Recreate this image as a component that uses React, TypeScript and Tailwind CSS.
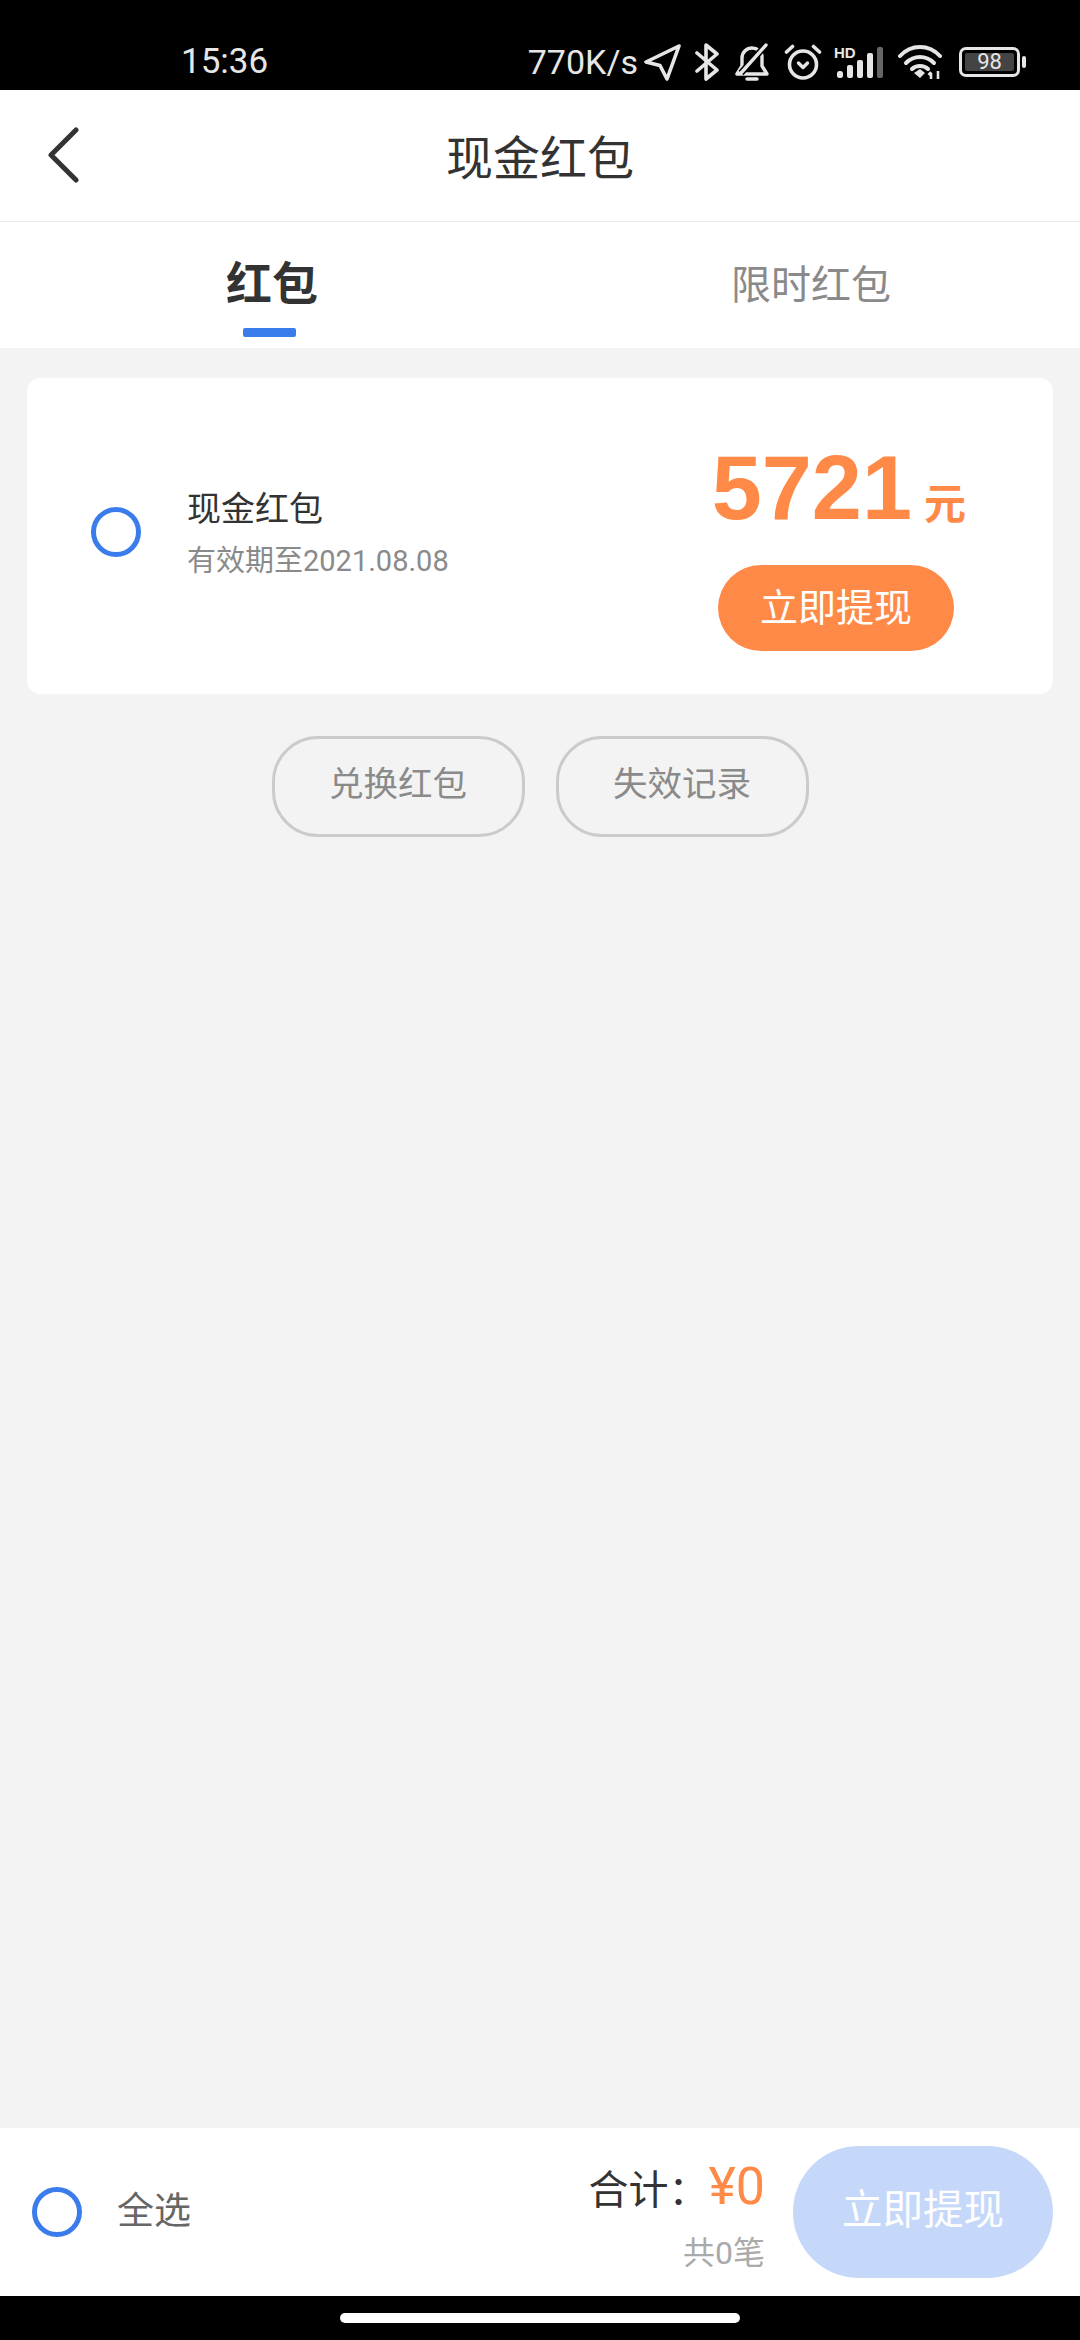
import React from "react";

const CJK = "font-['Roboto','Noto_Sans_CJK_SC',sans-serif]";

function Radio({ className }: { className?: string }) {
  return <div className={`w-[50px] h-[50px] rounded-full border-[5px] border-[#3b7cec] shrink-0 ${className ?? ""}`} />;
}

function StatusIcons() {
  const s = "#e6e6e6";
  return (
    <div className="flex items-center">
      <svg width="37" height="37" viewBox="0 0 37 37" fill="none" className="ml-[6px]">
        <path d="M35 2 L2 18 L16 21.5 L23 35 Z" stroke={s} strokeWidth="3.6" strokeLinejoin="round" />
      </svg>
      <svg width="24" height="38" viewBox="0 0 24 38" fill="none" className="ml-[14px]">
        <path d="M2 10 L22 27 L11 36 V2 L22 11 L2 28" stroke={s} strokeWidth="3.6" strokeLinejoin="round" strokeLinecap="round" />
      </svg>
      <svg width="34" height="38" viewBox="0 0 34 38" fill="none" className="ml-[16px]">
        <path d="M2 31 H32 L27 23 V14 C27 8 22 5 17 5 C12 5 7 9 7 15 V23 Z" stroke={s} strokeWidth="3.4" strokeLinejoin="round" />
        <path d="M12 36 H22" stroke={s} strokeWidth="3.4" strokeLinecap="round" />
        <path d="M6 30 L31 2" stroke="#000" strokeWidth="6.5" />
        <path d="M6 30 L31 2" stroke={s} strokeWidth="3.4" strokeLinecap="round" />
      </svg>
      <svg width="38" height="36" viewBox="0 0 38 36" fill="none" className="ml-[15px]">
        <circle cx="19" cy="20.5" r="13.5" stroke={s} strokeWidth="3.6" />
        <path d="M14.5 19 L19 23.5 L23.5 19" stroke={s} strokeWidth="3.4" strokeLinecap="round" strokeLinejoin="round" />
        <path d="M2.5 8 L8.5 2.5 M35.5 8 L29.5 2.5" stroke={s} strokeWidth="3.6" strokeLinecap="round" />
      </svg>
      <div className="relative w-[48px] h-[32px] ml-[13px]">
        <span className="absolute left-[-1px] top-[-1px] text-[15px] leading-[15px] font-bold text-[#e6e6e6] font-['Liberation_Sans',sans-serif]">HD</span>
        <svg width="48" height="32" viewBox="0 0 48 32" className="absolute inset-0">
          <rect x="2" y="25" width="6" height="7" rx="2.5" fill={s} />
          <rect x="12" y="19" width="6" height="13" rx="2" fill={s} />
          <rect x="22" y="14" width="6" height="18" rx="2" fill={s} />
          <rect x="32" y="7" width="6" height="25" rx="2" fill={s} />
          <rect x="42" y="1" width="6" height="31" rx="2" fill="#666" />
        </svg>
      </div>
      <svg width="44" height="34" viewBox="0 0 44 34" fill="none" className="ml-[15px]">
        <path d="M2 11 C13 -1 31 -1 42 11" stroke={s} strokeWidth="4" strokeLinecap="round" />
        <path d="M8 18 C16 10 28 10 36 18" stroke={s} strokeWidth="4" strokeLinecap="round" />
        <path d="M14 24 C18 20 26 20 30 24" stroke={s} strokeWidth="4" strokeLinecap="round" />
        <path d="M16 28 L22 24 L27 28 L22 33 Z" fill={s} />
        <path d="M33 34 V28 M30.5 30 L33 27 M40 34 V26" stroke={s} strokeWidth="2.6" />
      </svg>
      <div className="ml-[17px] flex items-center">
        <div className="w-[61px] h-[30px] rounded-[7px] border-[3px] border-[#e6e6e6] p-[3px] flex">
          <div className="flex-1 bg-[#444] rounded-[2px] flex items-center justify-center text-[22px] leading-none text-[#e6e6e6] font-['Roboto',sans-serif]">98</div>
        </div>
        <div className="w-[4px] h-[12px] ml-[2px] bg-[#e6e6e6] rounded-[2px]" />
      </div>
    </div>
  );
}

export default function App() {
  return (
    <div className={`w-[1080px] h-[2340px] flex flex-col bg-[#f3f3f3] overflow-hidden ${CJK}`}>
      <div className="h-[90px] bg-black flex items-center justify-between pt-[34px] pl-[181px] pr-[54px] shrink-0">
        <span className="text-[35px] leading-[38px] text-[#e6e6e6] font-['Roboto',sans-serif]">15:36</span>
        <div className="flex items-center">
          <span className="text-[34px] leading-[38px] text-[#e6e6e6] font-['Roboto',sans-serif]">770K/s</span>
          <StatusIcons />
        </div>
      </div>

      <div className="h-[132px] bg-white border-b border-[#e8ebec] relative flex items-center justify-center shrink-0">
        <svg width="34" height="56" viewBox="0 0 34 56" fill="none" className="absolute left-[46px] top-[37px]">
          <path d="M30 3 L5 28 L30 53" stroke="#333" strokeWidth="5" strokeLinecap="round" strokeLinejoin="round" />
        </svg>
        <span className="text-[47px] leading-none text-[#333] pt-[6px]">现金红包</span>
      </div>

      <div className="h-[126px] bg-white flex shrink-0">
        <div className="w-[544px] relative flex justify-center">
          <span className="text-[46px] leading-none font-bold text-[#333] mt-[39px]">红包</span>
          <div className="absolute left-[243px] top-[106px] w-[53px] h-[9px] rounded-[2px] bg-[#3b7cec]" />
        </div>
        <div className="w-[536px] flex justify-center">
          <span className="text-[40px] leading-none text-[#8a8a8a] mt-[44px] ml-[-2px]">限时红包</span>
        </div>
      </div>

      <div className="flex-1 min-h-0 px-[27px] pt-[30px]">
        <div className="h-[316px] bg-white rounded-[14px] flex items-center pl-[64px] pr-[87px]">
          <Radio className="mt-[-8px]" />
          <div className="ml-[46px] flex-1 mt-[-8px]">
            <div className="text-[34px] leading-[44px] text-[#333]">现金红包</div>
            <div className="text-[29px] leading-[34px] text-[#8a8a8a] mt-[13px]">有效期至2021.08.08</div>
          </div>
          <div className="flex flex-col items-end">
            <div className="flex items-baseline h-[144px]">
              <span className="text-[90px] leading-[134px] font-bold text-[#ff8a47] font-['Liberation_Sans',sans-serif]">5721</span>
              <span className="text-[42px] leading-[134px] font-bold text-[#ff8a47] ml-[12px]">元</span>
            </div>
            <div className="w-[236px] h-[86px] mr-[12px] rounded-[43px] bg-[#ff8a47] text-white text-[38px] flex items-center justify-center">立即提现</div>
          </div>
        </div>

        <div className="flex justify-center gap-[31px] mt-[42px]">
          <div className="w-[253px] h-[101px] rounded-[46px] border-[3px] border-[#cbcbcb] text-[34.5px] text-[#8a8a8a] flex items-center justify-center pb-[4px]">兑换红包</div>
          <div className="w-[253px] h-[101px] rounded-[46px] border-[3px] border-[#cbcbcb] text-[34.5px] text-[#8a8a8a] flex items-center justify-center pb-[4px]">失效记录</div>
        </div>
      </div>

      <div className="h-[168px] bg-white flex items-center pl-[32px] pr-[27px] shrink-0">
        <Radio />
        <span className="ml-[35px] text-[37px] text-[#666] flex-1">全选</span>
        <div className="flex flex-col items-end mr-[28px] mt-[7px]">
          <div className="flex items-baseline">
            <span className="text-[40px] leading-[52px] text-[#333]">合计：</span>
            <span className="text-[52px] leading-[52px] text-[#ff8a47]">¥0</span>
          </div>
          <div className="text-[32px] leading-[36px] text-[#aaa] mt-[18px]">共0笔</div>
        </div>
        <div className="w-[260px] h-[132px] rounded-[66px] bg-[#c5d8fa] text-white text-[40.5px] flex items-center justify-center pb-[4px]">立即提现</div>
      </div>

      <div className="h-[44px] bg-black flex justify-center pt-[17px] shrink-0">
        <div className="w-[400px] h-[10px] bg-white rounded-full" />
      </div>
    </div>
  );
}
